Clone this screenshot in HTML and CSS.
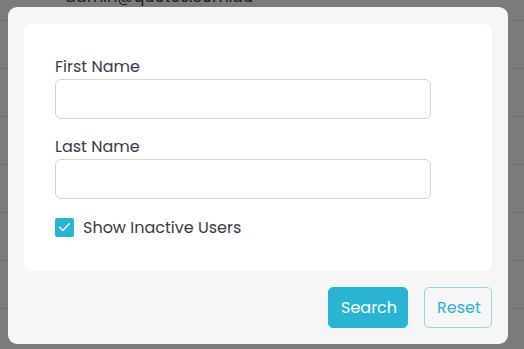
FILE: index.html
```html
<!DOCTYPE html>
<html lang="en">
<head>
  <meta charset="UTF-8">
  <title>User Search</title>
  <link rel="stylesheet" href="styles.css">
</head>
<body>
  <div class="page">
    <div class="rows">
      <div class="row"><span class="email">admin@quotes.com.au</span></div>
      <div class="row"></div>
      <div class="row"></div>
      <div class="row"></div>
      <div class="row"></div>
      <div class="row"></div>
      <div class="row"></div>
    </div>
  </div>

  <div class="modal">
    <form class="filters">
      <div class="field">
        <label for="first-name">First Name</label>
        <input id="first-name" type="text">
      </div>
      <div class="field">
        <label for="last-name">Last Name</label>
        <input id="last-name" type="text">
      </div>
      <label class="check">
        <span class="box">
          <svg width="13" height="10" viewBox="0 0 13 10"><path d="M1.5 5.2 L4.8 8.4 L11.5 1.6" fill="none" stroke="#fff" stroke-width="1.4" stroke-linecap="round" stroke-linejoin="round"/></svg>
        </span>
        Show Inactive Users
      </label>
    </form>
    <div class="actions">
      <button class="btn btn-primary">Search</button>
      <button class="btn btn-outline">Reset</button>
    </div>
  </div>
</body>
</html>
```

FILE: styles.css
```css
:root {
  --clr-overlay: #7b7b7b;
  --clr-line: #6f6f6f;
  --clr-modal: #f6f6f6;
  --clr-text: #3a3a48;
  --clr-border: #d4d4d4;
  --clr-accent: #29b5d1;
  --clr-accent-soft: #93d8e7;
}
*, *::before, *::after {box-sizing: border-box; margin: 0}
body {
  background: var(--clr-overlay);
  font-family: 'Poppins', 'Inter', 'Lato', sans-serif;
  color: var(--clr-text);
  overflow: hidden;
}
.page {
  height: 349px;
}
.rows {
  margin-top: -27px;
}
.row {
  height: 48px;
  border-bottom: 1px solid var(--clr-line);
  padding-left: 65px;
  display: flex;
  align-items: center;
}
.email {
  font-size: 16px;
  color: #1e1e24;
}
.modal {
  position: absolute;
  top: 7px;
  left: 8px;
  width: 500px;
  height: 337px;
  background: var(--clr-modal);
  border-radius: 9px;
  padding: 17px 16px 16px;
}
.filters {
  background: #fff;
  border-radius: 8px;
  padding: 31px 31px 32px;
  height: 247px;
}
.field {
  margin-bottom: 16px;
  display: flex;
  flex-direction: column;
}
.field label {
  font-size: 16px;
  line-height: 24px;
}
.field input {
  width: 376px;
  height: 40px;
  border: 1px solid var(--clr-border);
  border-radius: 6px;
  font: inherit;
}
.check {
  display: flex;
  align-items: center;
  gap: 9px;
  font-size: 16px;
  height: 24px;
}
.box {
  width: 19px;
  height: 19px;
  border-radius: 2px;
  background: var(--clr-accent);
  display: grid;
  place-items: center;
}
.actions {
  display: flex;
  justify-content: flex-end;
  gap: 16px;
  padding-top: 16px;
}
.btn {
  height: 41px;
  border-radius: 5px;
  font-family: inherit;
  font-size: 16px;
  padding: 0 12px;
}
.btn-primary {
  width: 80px;
  background: var(--clr-accent);
  border: 1px solid var(--clr-accent);
  color: #fff;
}
.btn-outline {
  width: 68px;
  background: transparent;
  border: 1px solid var(--clr-accent-soft);
  color: var(--clr-accent);
}
```
